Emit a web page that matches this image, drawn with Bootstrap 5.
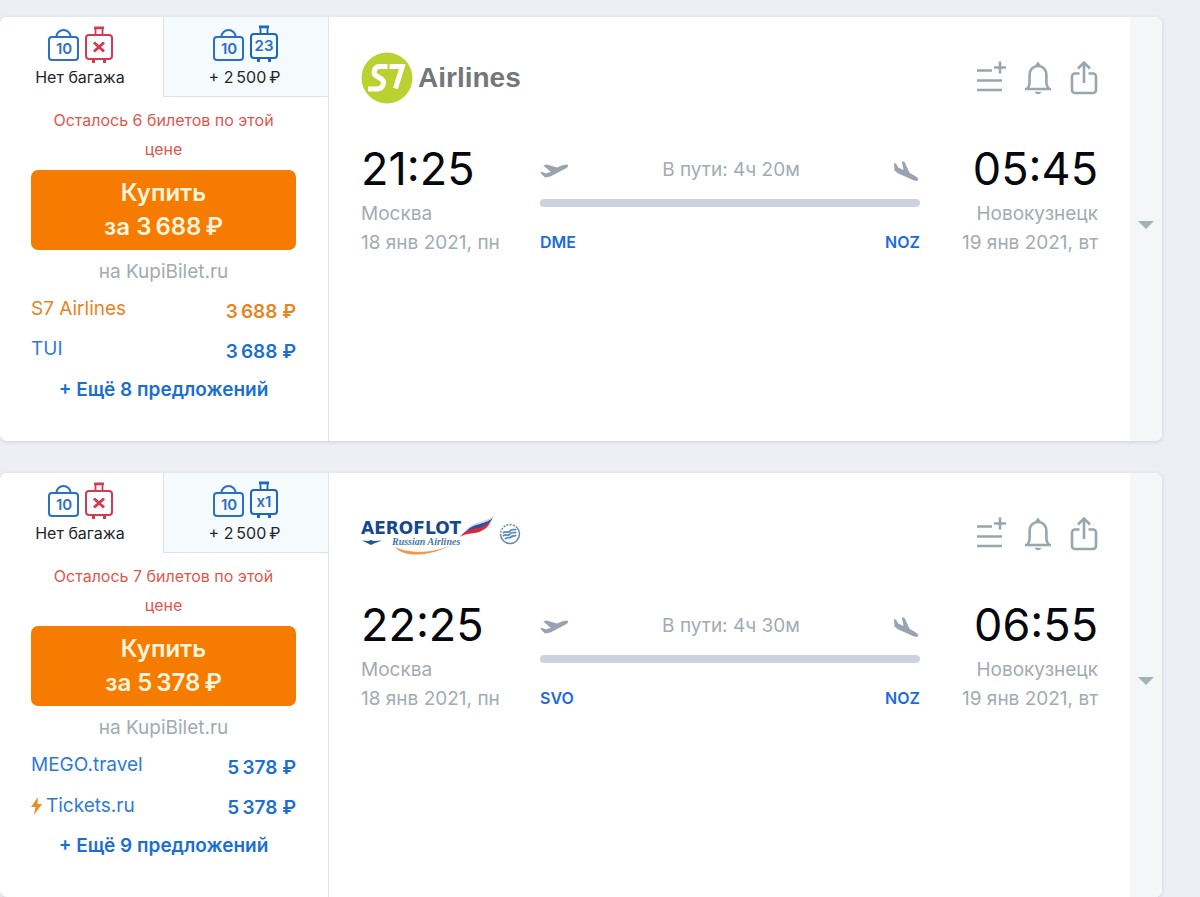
<!DOCTYPE html>
<html lang="ru">
<head>
<meta charset="utf-8">
<meta name="viewport" content="width=device-width, initial-scale=1">
<title>Авиабилеты Москва — Новокузнецк</title>
<link href="https://cdn.jsdelivr.net/npm/bootstrap@5.3.0/dist/css/bootstrap.min.css" rel="stylesheet">
<style>
  body { background: #edeff4; font-family: Inter, "Liberation Sans", sans-serif; color: #23272c; }
  a { text-decoration: none; }
  .tickets { padding: 17px 38px 0 0; gap: 32px; }
  .ticket { background: #fff; border-radius: 7px; min-height: 424px; box-shadow: 0 1px 4px rgba(80, 90, 110, .2); overflow: hidden; }
  .offers { flex: 0 0 329px; border-right: 1px solid #e1e4e8; }
  .tariff { height: 80px; padding: 8px 3px 0 0; border: 0; background: #fff; font-size: 16px; line-height: 24px; color: #23272c; display: flex; flex-direction: column; align-items: center; }
  .tariff-first { flex: 0 0 163px; }
  .tariff-alt { background: #f5fafd; border-left: 1px solid #dfe3e7; border-bottom: 1px solid #dfe3e7; }
  .offer-body { padding: 9px 32px 0 31px; }
  .seats-left { font-size: 16px; line-height: 29px; color: #e0574f; margin-bottom: 6px; padding: 0 16px; }
  .buy { --bs-btn-bg: #f57c00; --bs-btn-hover-bg: #e67300; --bs-btn-active-bg: #db6d00; --bs-btn-color: #fff5dc; --bs-btn-hover-color: #fff; --bs-btn-active-color: #fff; --bs-btn-border-width: 0; --bs-btn-border-radius: 7px; --bs-btn-padding-y: 6px; --bs-btn-font-size: 24px; --bs-btn-line-height: 34px; --bs-btn-font-weight: 600; }
  .seller { font-size: 19px; line-height: 28px; color: #a2abb2; margin: 8px 0 4px; }
  .offer { font-size: 19px; line-height: 38px; color: #2f7bd6; }
  .offer strong { font-weight: 600; padding-top: 4px; line-height: 36px; color: #1b6fd2; }
  .offer-own, .offer-own strong { color: #e8831e; }
  .offer-more { font-size: 19px; line-height: 40px; font-weight: 600; color: #1b6fd2; }
  .flight { padding: 34px 32px 0; }
  .flight-head { height: 54px; margin-bottom: 34px; }
  .tools { gap: 18px; }
  .tool { color: #98a6ad; line-height: 0; }
  .schedule { display: grid; grid-template-columns: 179px 1fr 178px; }
  .clock { font-size: 45px; line-height: 60px; color: #05070c; }
  .place { font-size: 19px; line-height: 29px; color: #a2abb2; }
  .route-top { height: 60px; padding-top: 3px; color: #98a2b2; }
  .route-time { font-size: 19px; color: #a2abb2; }
  .route-line { height: 8px; border-radius: 4px; background: #ccd3dd; }
  .airport { font-size: 16px; line-height: 29px; font-weight: 600; color: #1b6be0; margin-top: 21px; }
  .expander { flex: 0 0 32px; background: #f4f6f8; color: #a3b2b6; }
  .expander svg { margin-bottom: 12px; }
  @media (max-width: 991px) {
    .tickets { padding-right: 0; }
    .ticket { flex-wrap: wrap; }
    .offers, .flight { flex: 1 1 100%; }
    .flight { padding-bottom: 24px; }
    .expander { flex: 1 1 100%; }
    .schedule { grid-template-columns: auto 1fr auto; gap: 16px; }
  }
</style>
</head>
<body>

<svg width="0" height="0" class="position-absolute" aria-hidden="true">
  <defs>
    <g id="i-bag" fill="none" stroke="#2d6fc4" stroke-width="2">
      <rect x="1" y="13" width="29" height="23" rx="3"/>
      <path d="M8.500 12.500a7 6.500 0 0 1 14 0"/>
    </g>
    <g id="i-case" fill="none" stroke="currentColor" stroke-width="2">
      <rect x="1" y="9" width="26" height="24" rx="3"/>
      <path d="M10.500 8V2M17.500 8V2" stroke-width="1.800"/>
      <path d="M9 1.800h10" stroke-width="2.800"/>
      <path d="M8.500 33v4M19.500 33v4" stroke-width="3"/>
    </g>
    <g id="i-list" fill="none" stroke="currentColor" stroke-width="2.600">
      <path d="M1 10.500h15M1 20.500h25M1 30h25M18 7.500h12M24 1.500v12"/>
    </g>
    <g id="i-bell" fill="none" stroke="currentColor" stroke-width="2.600">
      <path d="M1 29h26"/>
      <path d="M3.500 28.500c1.600-1.600 2.100-3 2.100-6V15c0-5.400 3.600-9 8.400-9s8.400 3.600 8.400 9v7.500c0 3 .5 4.400 2.100 6"/>
      <path d="M11 5.500l3-4 3 4z" fill="currentColor" stroke="none"/>
      <path d="M10.500 31.800h7c-.6 1.600-2 2.400-3.500 2.400s-2.900-.8-3.500-2.400z" fill="currentColor" stroke="none"/>
    </g>
    <g id="i-share" fill="none" stroke="currentColor" stroke-width="2.600">
      <path d="M9.500 13.500H5a3 3 0 0 0-3 3V30a3 3 0 0 0 3 3h18a3 3 0 0 0 3-3V16.500a3 3 0 0 0-3-3h-4.500M14 23V3M8 8.500l6-6 6 6"/>
    </g>
    <path id="i-depart" fill="currentColor" d="M0 9.500l2.400-.6 3.700 1.600 4.700-1.700L3.300 2.400 6.500 1.500 17 4.600l6.500-2.500c2-.8 4-.8 4.500.2.500 1.100-.9 2.600-2.900 3.500L10.400 13.500 5 14.500z"/>
    <path id="i-land" fill="currentColor" d="M1 2l2 .8 2.200 3.700L10.500 9 8.800 0l2.900 1.200 4.800 10.600 6.300 3.700c2 1.100 2.800 2.500 2.300 3.600-.5 1-2.500 1-4.400.1L5.300 12.400 1.500 9.500z"/>
  </defs>
</svg>

<main class="tickets d-flex flex-column">

  <article class="ticket d-flex">
    <section class="offers">
      <div class="d-flex">
        <button type="button" class="tariff tariff-first">
          <svg width="66" height="40" viewBox="0 0 66 40">
            <use href="#i-bag" x="1" y="-1"/>
            <text x="17" y="29" text-anchor="middle" font-size="15" font-weight="600" fill="#2d6fc4">10</text>
            <g transform="translate(38 1)" color="#d33b50"><use href="#i-case"/><path d="M9 16.500l10 9M19 16.500l-10 9" stroke="currentColor" stroke-width="3"/></g>
          </svg>
          Нет багажа
        </button>
        <button type="button" class="tariff tariff-alt flex-grow-1">
          <svg width="66" height="40" viewBox="0 0 66 40">
            <use href="#i-bag" x="1" y="-1"/>
            <text x="17" y="29" text-anchor="middle" font-size="15" font-weight="600" fill="#2d6fc4">10</text>
            <g transform="translate(38 0)" color="#1f64bd"><use href="#i-case"/><text x="14" y="26" text-anchor="middle" font-size="15" font-weight="600" fill="#2d6fc4">23</text></g>
          </svg>
          + 2&#8201;500&#8201;₽
        </button>
      </div>
      <div class="offer-body text-center">
        <div class="seats-left">Осталось 6 билетов по этой цене</div>
        <button type="button" class="btn buy w-100">Купить<br>за 3&#8201;688&#8201;₽</button>
        <div class="seller">на KupiBilet.ru</div>
        <a href="#" class="offer offer-own d-flex justify-content-between"><span>S7 Airlines</span><strong>3&#8201;688 ₽</strong></a>
        <a href="#" class="offer d-flex justify-content-between"><span>TUI</span><strong>3&#8201;688 ₽</strong></a>
        <a href="#" class="offer-more d-block">+ Ещё 8 предложений</a>
      </div>
    </section>

    <section class="flight flex-grow-1">
      <div class="flight-head d-flex justify-content-between align-items-center">
        <svg width="162" height="54" viewBox="0 0 162 54" role="img" aria-label="S7 Airlines">
          <circle cx="26" cy="27" r="25.500" fill="#b9d131"/>
          <g fill="none" stroke="#fff" stroke-width="5">
            <path d="M26.500 15.500H18.500c-5 0-7.500 7-3 9.500l5 3c4 2.500 1.500 10-4 10H7"/>
            <path d="M28.500 15.500h12.800L34.500 37.500"/>
          </g>
          <text x="57" y="36" font-size="28" font-weight="700" font-family="Liberation Sans, sans-serif" fill="#72777b">Airlines</text>
        </svg>
        <div class="tools d-flex">
          <button type="button" class="btn p-0 border-0 tool" aria-label="Добавить в список"><svg width="30" height="36" viewBox="0 0 30 36"><use href="#i-list"/></svg></button>
          <button type="button" class="btn p-0 border-0 tool" aria-label="Следить за ценой"><svg width="28" height="36" viewBox="0 0 28 36"><use href="#i-bell"/></svg></button>
          <button type="button" class="btn p-0 border-0 tool" aria-label="Поделиться"><svg width="28" height="36" viewBox="0 0 28 36"><use href="#i-share"/></svg></button>
        </div>
      </div>
      <div class="schedule">
        <div>
          <div class="clock">21:25</div>
          <div class="place">Москва<br>18 янв 2021, пн</div>
        </div>
        <div>
          <div class="route-top d-flex justify-content-between align-items-center">
            <svg width="29" height="15" viewBox="0 0 29 15"><use href="#i-depart"/></svg>
            <span class="route-time">В пути: 4ч 20м</span>
            <svg width="27" height="20" viewBox="0 0 27 20"><use href="#i-land"/></svg>
          </div>
          <div class="route-line"></div>
          <div class="airport d-flex justify-content-between"><span>DME</span><span>NOZ</span></div>
        </div>
        <div class="text-end">
          <div class="clock">05:45</div>
          <div class="place">Новокузнецк<br>19 янв 2021, вт</div>
        </div>
      </div>
    </section>
    <button type="button" class="btn border-0 rounded-0 p-0 expander" aria-label="Подробнее"><svg width="16" height="8" viewBox="0 0 16 8"><path d="M0 0h16L8 8z" fill="currentColor"/></svg></button>
  </article>

  <article class="ticket d-flex">
    <section class="offers">
      <div class="d-flex">
        <button type="button" class="tariff tariff-first">
          <svg width="66" height="40" viewBox="0 0 66 40">
            <use href="#i-bag" x="1" y="-1"/>
            <text x="17" y="29" text-anchor="middle" font-size="15" font-weight="600" fill="#2d6fc4">10</text>
            <g transform="translate(38 1)" color="#d33b50"><use href="#i-case"/><path d="M9 16.500l10 9M19 16.500l-10 9" stroke="currentColor" stroke-width="3"/></g>
          </svg>
          Нет багажа
        </button>
        <button type="button" class="tariff tariff-alt flex-grow-1">
          <svg width="66" height="40" viewBox="0 0 66 40">
            <use href="#i-bag" x="1" y="-1"/>
            <text x="17" y="29" text-anchor="middle" font-size="15" font-weight="600" fill="#2d6fc4">10</text>
            <g transform="translate(38 0)" color="#1f64bd"><use href="#i-case"/><text x="14" y="26" text-anchor="middle" font-size="15" font-weight="600" fill="#2d6fc4">x1</text></g>
          </svg>
          + 2&#8201;500&#8201;₽
        </button>
      </div>
      <div class="offer-body text-center">
        <div class="seats-left">Осталось 7 билетов по этой цене</div>
        <button type="button" class="btn buy w-100">Купить<br>за 5&#8201;378&#8201;₽</button>
        <div class="seller">на KupiBilet.ru</div>
        <a href="#" class="offer d-flex justify-content-between"><span>MEGO.travel</span><strong>5&#8201;378 ₽</strong></a>
        <a href="#" class="offer d-flex justify-content-between"><span class="d-flex align-items-center gap-1"><svg width="11" height="18" viewBox="0 0 11 18"><path d="M7 0L0 10h4.500L3 18l8-11H6.500z" fill="#f08a24"/></svg>Tickets.ru</span><strong>5&#8201;378 ₽</strong></a>
        <a href="#" class="offer-more d-block">+ Ещё 9 предложений</a>
      </div>
    </section>

    <section class="flight flex-grow-1">
      <div class="flight-head d-flex justify-content-between align-items-center">
        <svg width="162" height="54" viewBox="0 0 162 54" role="img" aria-label="Aeroflot Russian Airlines">
          <text x="0" y="27" font-size="17" font-weight="700" font-family="DejaVu Sans, sans-serif" fill="#17488f">AEROFLOT</text>
          <path d="M1 33.500l7 .5c.8-1.300 3.200-1.300 4 0l9-.5-8 3-3 1.500-3-1.500z" fill="#1f5aa0"/>
          <text x="31" y="38" font-size="10" font-weight="700" font-style="italic" font-family="Liberation Serif, serif" fill="#4a78a8">Russian Airlines</text>
          <path d="M34 40c14 7 38 6 54-1-13 8-44 14-54 1z" fill="#ee9a4a"/>
          <path d="M102 27c4-7 9-10 17-12 6-2 10-3 15-8-4 7-8 10-15 13-7 2-12 3-17 7z" fill="#cfd9ea"/>
          <path d="M104 26c4-6 10-8 15-9 6-2 9-3 13-6-3 5-6 7-12 10-6 2-12 2-16 5z" fill="#264f9e"/>
          <path d="M99 30c6-8 12-8 18-9 5-1 9-4 13-7-3 6-5 8-12 11-7 2-13 1-19 5z" fill="#d8293d"/>
          <circle cx="149" cy="27" r="9.500" fill="none" stroke="#6788ae" stroke-width="1.500"/>
          <path d="M139.500 27a9.500 9.500 0 0 1 17-6" fill="none" stroke="#fff" stroke-width="3" stroke-dasharray="1.300 2"/>
          <path d="M142 26c3-3 5 1 7-2s5 0 6-2M142 29c3-3 5 1 7-2s5 0 6-2M144 32c3-3 4 0 6-2s4 0 5-2" fill="none" stroke="#5f8dbd" stroke-width="1.800"/>
        </svg>
        <div class="tools d-flex">
          <button type="button" class="btn p-0 border-0 tool" aria-label="Добавить в список"><svg width="30" height="36" viewBox="0 0 30 36"><use href="#i-list"/></svg></button>
          <button type="button" class="btn p-0 border-0 tool" aria-label="Следить за ценой"><svg width="28" height="36" viewBox="0 0 28 36"><use href="#i-bell"/></svg></button>
          <button type="button" class="btn p-0 border-0 tool" aria-label="Поделиться"><svg width="28" height="36" viewBox="0 0 28 36"><use href="#i-share"/></svg></button>
        </div>
      </div>
      <div class="schedule">
        <div>
          <div class="clock">22:25</div>
          <div class="place">Москва<br>18 янв 2021, пн</div>
        </div>
        <div>
          <div class="route-top d-flex justify-content-between align-items-center">
            <svg width="29" height="15" viewBox="0 0 29 15"><use href="#i-depart"/></svg>
            <span class="route-time">В пути: 4ч 30м</span>
            <svg width="27" height="20" viewBox="0 0 27 20"><use href="#i-land"/></svg>
          </div>
          <div class="route-line"></div>
          <div class="airport d-flex justify-content-between"><span>SVO</span><span>NOZ</span></div>
        </div>
        <div class="text-end">
          <div class="clock">06:55</div>
          <div class="place">Новокузнецк<br>19 янв 2021, вт</div>
        </div>
      </div>
    </section>
    <button type="button" class="btn border-0 rounded-0 p-0 expander" aria-label="Подробнее"><svg width="16" height="8" viewBox="0 0 16 8"><path d="M0 0h16L8 8z" fill="currentColor"/></svg></button>
  </article>

</main>
<script src="https://cdn.jsdelivr.net/npm/bootstrap@5.3.0/dist/js/bootstrap.bundle.min.js"></script>
</body>
</html>
